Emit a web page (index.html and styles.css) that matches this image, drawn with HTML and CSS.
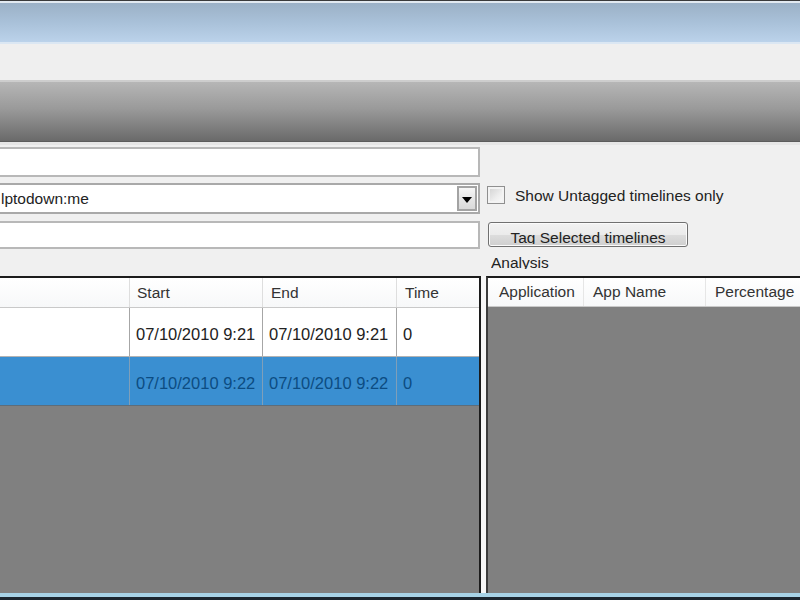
FILE: index.html
```html
<!DOCTYPE html>
<html>
<head>
<meta charset="utf-8">
<link rel="stylesheet" href="styles.css">
</head>
<body>
<div class="app">
  <div class="titlebar"></div>
  <div class="menubar"></div>
  <div class="banner"></div>
  <div class="form">
    <div class="controls">
      <div class="col-left">
        <div class="field field-1"></div>
        <div class="combo">
          <span class="combo-text">lptodown:me</span>
          <span class="combo-btn"><span class="arrow"></span></span>
        </div>
        <div class="field field-3"></div>
      </div>
      <div class="col-right">
        <label class="check-row"><span class="checkbox"></span><span class="check-label">Show Untagged timelines only</span></label>
        <button class="tag-btn"><span class="tag-btn-text">Tag Selected timelines</span></button>
        <div class="section-label"><span>Analysis</span></div>
      </div>
    </div>
    <div class="tables">
      <div class="grid-left">
        <div class="row head">
          <div class="cell"></div>
          <div class="cell">Start</div>
          <div class="cell">End</div>
          <div class="cell">Time</div>
        </div>
        <div class="row data">
          <div class="cell"></div>
          <div class="cell">07/10/2010 9:21</div>
          <div class="cell">07/10/2010 9:21</div>
          <div class="cell">0</div>
        </div>
        <div class="row data selected">
          <div class="cell"></div>
          <div class="cell">07/10/2010 9:22</div>
          <div class="cell">07/10/2010 9:22</div>
          <div class="cell">0</div>
        </div>
      </div>
      <div class="grid-right">
        <div class="rhead">
          <div class="rcell c1">Application</div>
          <div class="rcell c2">App Name</div>
          <div class="rcell c3">Percentage</div>
        </div>
      </div>
    </div>
  </div>
  <div class="taskbar"></div>
</div>
</body>
</html>
```
FILE: styles.css
```css
html, body {
  margin: 0;
  padding: 0;
}
body {
  width: 800px;
  height: 600px;
  overflow: hidden;
  background: #f0f0f0;
  font-family: "Liberation Sans", Arial, sans-serif;
  color: #222;
}
.app {
  display: flex;
  flex-direction: column;
  height: 600px;
}
.titlebar {
  height: 39px;
  border-top: 1px solid #3a3a3a;
  box-shadow: inset 0 2px 0 #e2e9f0, inset 0 -2px 0 #dbe7f3;
  background: linear-gradient(#9aafc4, #a9c1d9 50%, #bdd4ec);
  padding: 2px 0;
}
.menubar {
  height: 36px;
  background: #efefef;
}
.banner {
  height: 59px;
  border-top: 2px solid #cdcdcd;
  border-bottom: 1px solid #5c5c5c;
  background: linear-gradient(#b6b6b6, #9a9a9a 45%, #6a6a6a);
}
.form {
  height: 451px;
  display: flex;
  flex-direction: column;
  background: #f0f0f0;
  box-shadow: inset 0 3px 0 #e6e6e6;
}
.controls {
  height: 134px;
  display: grid;
  grid-template-columns: 483px 1fr;
  column-gap: 5px;
  margin-left: -2px;
}
.col-left {
  display: flex;
  flex-direction: column;
  padding-top: 5px;
}
.field {
  width: 478px;
  background: #fff;
  border: 2px solid #b8b8b8;
}
.field-1 {
  height: 26px;
  margin-bottom: 6px;
}
.field-3 {
  height: 24px;
}
.combo {
  width: 478px;
  height: 27px;
  margin-bottom: 7px;
  background: #fff;
  border: 2px solid #a9a9a9;
  display: flex;
  align-items: center;
  justify-content: space-between;
}
.combo-text {
  font-size: 15.5px;
  color: #222;
  padding-left: 1px;
}
.combo-btn {
  width: 16px;
  height: 21px;
  margin-right: 1px;
  border: 2px solid #a3a3a3;
  background: linear-gradient(#f6f6f6, #e6e6e6 50%, #d9d9d9);
  display: flex;
  align-items: center;
  justify-content: center;
}
.arrow {
  width: 0;
  height: 0;
  border-left: 5px solid transparent;
  border-right: 5px solid transparent;
  border-top: 6px solid #000;
  margin-top: 2px;
}
.col-right {
  display: flex;
  flex-direction: column;
  align-items: flex-start;
}
.check-row {
  margin-top: 44px;
  margin-left: 1px;
  height: 18px;
  display: flex;
  align-items: center;
}
.checkbox {
  width: 16px;
  height: 16px;
  border: 1px solid #8f8f8f;
  background: linear-gradient(135deg, #cfcfcf, #eeeeee 60%, #fbfbfb);
  box-shadow: inset 0 0 0 2px #f3f3f3;
}
.check-label {
  font-size: 15.5px;
  color: #222;
  margin-left: 10px;
  margin-top: 1px;
}
.tag-btn {
  margin-top: 18px;
  margin-left: 2px;
  width: 200px;
  height: 25px;
  padding: 4px 0 0 0;
  border: 1px solid #707070;
  border-radius: 3px;
  background: linear-gradient(#f2f2f2, #ebebeb 50%, #dddddd 51%, #cfcfcf);
  box-shadow: inset 0 0 0 1px #fbfbfb;
  font-family: "Liberation Sans", Arial, sans-serif;
  font-size: 15.5px;
  color: #222;
  display: block;
  overflow: hidden;
}
.tag-btn-text {
  display: block;
  height: 15px;
  line-height: 17px;
  overflow: hidden;
}
.section-label {
  margin-top: 8px;
  margin-left: 5px;
  height: 14px;
  overflow: hidden;
  font-size: 15.5px;
  line-height: 16px;
  color: #222;
}
.tables {
  flex: 1;
  display: grid;
  grid-template-columns: 483px 1fr;
  column-gap: 5px;
  margin-left: -2px;
  min-height: 0;
}
.grid-left {
  border: 2px solid #1c1c1c;
  border-bottom: none;
  background: #808080;
  box-shadow: 5px 0 0 #f7f7f7;
  overflow: hidden;
}
.row {
  display: grid;
  grid-template-columns: 130px 133px 134px 1fr;
}
.head {
  height: 29px;
  background: linear-gradient(#ffffff, #f7f8f9);
  border-bottom: 1px solid #c9c9c9;
}
.head .cell {
  font-size: 15.5px;
  color: #333;
  line-height: 29px;
  padding-left: 7px;
  border-right: 1px solid #dedede;
}
.head .cell:nth-child(3) { padding-left: 8px; }
.head .cell:nth-child(4) { padding-left: 8px; border-right: none; }
.data {
  height: 48px;
  background: #fff;
  border-bottom: 1px solid #b3b3b3;
}
.data .cell {
  font-size: 16.5px;
  line-height: 19px;
  padding: 17px 0 0 6px;
  border-right: 1px solid #a6a6a6;
}
.data .cell:nth-child(4) { border-right: none; }
.selected {
  background: #3a8fd1;
  border-bottom: 1px solid #5d6d7a;
}
.selected .cell {
  color: #0c4c82;
  border-right-color: #7f9fb9;
}
.grid-right {
  border-top: 2px solid #1c1c1c;
  border-left: 2px solid #3c3c3c;
  background: #808080;
  overflow: hidden;
}
.rhead {
  height: 28px;
  display: flex;
  background: linear-gradient(#ffffff, #f7f8f9);
  border-bottom: 1px solid #c9c9c9;
  white-space: nowrap;
}
.rcell {
  flex-shrink: 0;
  font-size: 15.5px;
  color: #333;
  line-height: 28px;
  border-right: 1px solid #e6e6e6;
}
.c1 { width: 84px; padding-left: 11px; }
.c2 { width: 112px; padding-left: 9px; }
.c3 { width: 200px; padding-left: 9px; border-right: none; }
.taskbar {
  height: 4px;
  background: #a7d3e7;
  border-bottom: 3px solid #1b2630;
}
```
